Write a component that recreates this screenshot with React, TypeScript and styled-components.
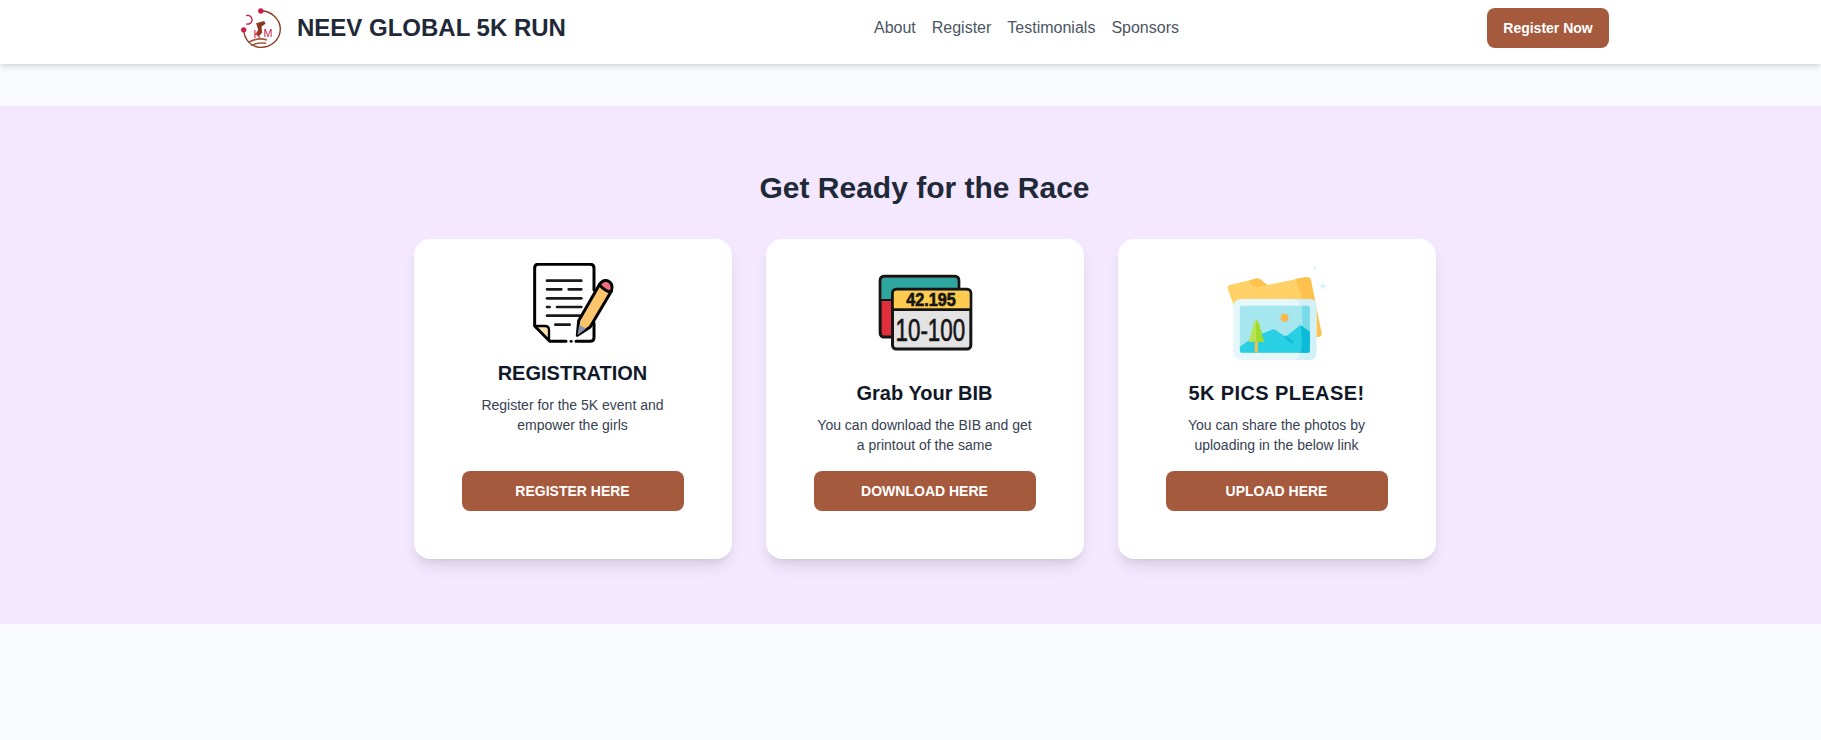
import React from "react";
import styled, { createGlobalStyle } from "styled-components";

const GlobalStyle = createGlobalStyle`
  html, body {
    margin: 0;
    padding: 0;
    background: #f9fafb;
    font-family: "Liberation Sans", Arial, sans-serif;
    overflow: hidden;
  }
  * { box-sizing: border-box; }
`;

const Page = styled.div`
  min-height: 740px;
  background: #f9fafb;
`;

const Header = styled.header`
  height: 64px;
  background: #fff;
  box-shadow: 0 4px 6px -1px rgba(0, 0, 0, 0.1), 0 2px 4px -2px rgba(0, 0, 0, 0.1);
  padding: 0 212px 8px 240px;
  display: flex;
  justify-content: space-between;
  align-items: center;
`;

const Brand = styled.div`
  display: flex;
  align-items: center;
  gap: 15px;
`;

const BrandName = styled.span`
  font-size: 24px;
  font-weight: 700;
  color: #1f2937;
`;

const Nav = styled.nav`
  display: flex;
  gap: 16px;
`;

const NavLink = styled.a`
  font-size: 16px;
  color: #4b5563;
`;

const Button = styled.button<{ $wide?: boolean }>`
  border: 0;
  background: #a65a3d;
  color: #fff;
  font-family: inherit;
  font-weight: 700;
  font-size: 14px;
  border-radius: 8px;
  height: 40px;
  width: ${(p) => (p.$wide ? "222px" : "122px")};
`;

const Section = styled.section`
  margin-top: 42px;
  height: 518px;
  background: #f3e8ff;
  padding: 64px 0 0 28px;
  display: flex;
  flex-direction: column;
  align-items: center;
`;

const Title = styled.h2`
  margin: 0 0 33px;
  font-size: 30px;
  line-height: 36px;
  font-weight: 700;
  color: #1f2937;
`;

const Cards = styled.div`
  display: grid;
  grid-template-columns: repeat(3, 318px);
  gap: 34px;
`;

const Card = styled.article`
  height: 320px;
  background: #fff;
  border-radius: 16px;
  box-shadow: 0 10px 15px -3px rgba(0, 0, 0, 0.1), 0 4px 6px -4px rgba(0, 0, 0, 0.1);
  display: flex;
  flex-direction: column;
  align-items: center;
  padding: 24px 0 48px;
`;

const IconSlot = styled.div<{ $height: number }>`
  height: ${(p) => p.$height}px;
  display: flex;
  align-items: flex-start;
  justify-content: center;
`;

const CardTitle = styled.h3<{ $tracking?: number }>`
  margin: 0 0 8px;
  font-size: 20px;
  line-height: 28px;
  font-weight: 700;
  color: #111827;
  letter-spacing: ${(p) => p.$tracking ?? 0}px;
`;

const CardText = styled.p`
  margin: 0;
  width: 222px;
  font-size: 14px;
  line-height: 20px;
  text-align: center;
  color: #374151;
`;

const CardButton = styled(Button)`
  margin-top: auto;
`;

const LogoMark = () => (
  <svg width="42" height="42" viewBox="60 20 125 125">
    <path d="M122 32 C150 30 180 55 180 85 C180 118 152 140 122 140 C95 140 72 118 71 88" fill="none" stroke="#8a3a22" strokeWidth="4" />
    <circle cx="122" cy="32" r="8" fill="#c9204a" />
    <circle cx="71" cy="88" r="8" fill="#c9204a" />
    <path d="M78 46 A13 13 0 1 1 78 70" fill="none" stroke="#c9204a" strokeWidth="4" />
    <path d="M108 68 L132 62 L136 70 L124 78 L126 96 L116 108 L108 100 L114 88 Z" fill="#8a3a22" />
    <path d="M84 126 C100 116 120 112 140 118 M92 134 C108 128 124 126 138 128" fill="none" stroke="#a65a3d" strokeWidth="5" />
    <text x="100" y="112" fontSize="32" fill="#c9204a" fontFamily="Liberation Sans">K</text>
    <text x="130" y="110" fontSize="32" fill="#c9204a" fontFamily="Liberation Sans">M</text>
  </svg>
);

const FormIcon = () => (
  <svg width="140" height="82" viewBox="9 39 420 246">
    <path
      d="M282 120 V54 Q282 43 270 43 H115 Q104 43 104 54 V228 L150 274 H198 M228 274 H270 Q282 274 282 262 V220"
      fill="#fff"
      stroke="#000"
      strokeWidth="9"
      strokeLinecap="round"
      strokeLinejoin="round"
    />
    <path d="M213 274 H214" stroke="#000" strokeWidth="8" strokeLinecap="round" />
    <path d="M105 228 H135 Q147 228 147 240 V270 Z" fill="#fde3b0" stroke="#000" strokeWidth="7" strokeLinejoin="round" />
    <g stroke="#1a1a1a" strokeWidth="8" strokeLinecap="round">
      <path d="M141 92 H244" />
      <path d="M141 118 H184 M206 118 H244" />
      <path d="M141 145 H244" />
      <path d="M141 171 H149 M171 171 H244" />
      <path d="M141 197 H244" />
      <path d="M166 224 H209" />
    </g>
    <path d="M232 256 L236 212 L298 104 L334 124 L270 232 Z" fill="#fbc56d" stroke="#000" strokeWidth="9" strokeLinejoin="round" />
    <path d="M232 256 L238 224 L258 236 Z" fill="#8a94a6" />
    <path d="M298 104 Q308 88 322 92 Q342 100 334 124 Q320 128 298 104 Z" fill="#f0717c" stroke="#000" strokeWidth="9" strokeLinejoin="round" />
  </svg>
);

const BibIcon = () => (
  <svg width="120" height="97" viewBox="13.5 9 360 291">
    <rect x="59" y="49" width="236" height="182" rx="11" fill="#e02f3d" stroke="#151515" strokeWidth="9" />
    <path d="M63 118 V62 Q63 53 72 53 H282 Q291 53 291 62 V118 Z" fill="#2ea6a0" />
    <path d="M60 120 H100" stroke="#151515" strokeWidth="6" />
    <rect x="96" y="88" width="235" height="179" rx="11" fill="#e4e3e4" stroke="#151515" strokeWidth="9" />
    <path d="M100 148 V101 Q100 92 109 92 H318 Q327 92 327 101 V148 Z" fill="#fdcb50" />
    <path d="M97 149 H330" stroke="#151515" strokeWidth="8" />
    <text transform="translate(137 139) scale(0.9 1)" fontSize="54" fontWeight="700" fill="#151515" stroke="#151515" strokeWidth="2" fontFamily="Liberation Sans">42.195</text>
    <text transform="translate(105 244) scale(0.7 1)" fontSize="96" fill="#151515" stroke="#151515" strokeWidth="2" fontFamily="Liberation Sans">10-100</text>
  </svg>
);

const PhotoIcon = () => (
  <svg width="130" height="102" viewBox="4.5 24 390 306">
    <path d="M51 100 Q50 92 58 90 L135 71 Q146 69 155 77 L170 90 L287 66 Q298 64 301 74 L333 235 Q334 243 326 245 L120 290 Z" fill="#ffd166" />
    <path d="M255 72 L287 66 Q298 64 301 74 L333 235 Q334 243 326 245 L316 247 Z" fill="#ffc14d" />
    <path d="M115 78 L135 71 Q146 69 155 77 L170 90 L140 96 Q128 96 115 78 Z" fill="#ffc14d" />
    <rect x="68" y="132" width="250" height="183" rx="22" fill="#e6f7fa" />
    <path d="M245 132 H296 Q318 132 318 154 V293 Q318 315 296 315 H245 Q268 315 268 293 V154 Q268 132 245 132 Z" fill="#d2f1f6" />
    <rect x="88" y="152" width="210" height="141" rx="6" fill="#a6e6ef" />
    <path d="M275 152 H292 Q298 152 298 158 V287 Q298 293 292 293 H275 Z" fill="#7adbe8" />
    <path d="M88 275 L130 245 L190 222 L225 245 L270 210 L298 230 V287 Q298 293 292 293 H94 Q88 293 88 287 Z" fill="#29cfe2" />
    <path d="M272 212 L298 230 V287 Q298 293 292 293 H262 Q274 293 274 275 Z" fill="#0dbbd9" />
    <path d="M225 245 L245 262" stroke="#0dbbd9" strokeWidth="7" strokeLinecap="round" />
    <circle cx="222" cy="188" r="12" fill="#fbb84a" />
    <rect x="133" y="250" width="9" height="43" fill="#f5c04e" />
    <path d="M137 192 L150 215 H146 L156 235 H151 L162 260 H113 L124 235 H119 L129 215 H125 Z" fill="#b8e356" />
    <path d="M137 192 L150 215 H146 L156 235 H151 L162 260 H137 Z" fill="#9fdc2e" />
    <path d="M338 80 L342 89 L351 93 L342 97 L338 106 L334 97 L325 93 L334 89 Z" fill="#d7f5f8" />
    <circle cx="312" cy="38" r="4" fill="#d7f5f8" />
  </svg>
);

const cards = [
  { key: "reg", title: "REGISTRATION", text: "Register for the 5K event and empower the girls", action: "REGISTER HERE", slot: 96, tracking: 0, icon: <FormIcon /> },
  { key: "bib", title: "Grab Your BIB", text: "You can download the BIB and get a printout of the same", action: "DOWNLOAD HERE", slot: 116, tracking: 0, icon: <BibIcon /> },
  { key: "pics", title: "5K PICS PLEASE!", text: "You can share the photos by uploading in the below link", action: "UPLOAD HERE", slot: 116, tracking: 0.4, icon: <PhotoIcon /> },
];

export default function App() {
  return (
    <Page>
      <GlobalStyle />
      <Header>
        <Brand>
          <LogoMark />
          <BrandName>NEEV GLOBAL 5K RUN</BrandName>
        </Brand>
        <Nav>
          {["About", "Register", "Testimonials", "Sponsors"].map((l) => (
            <NavLink key={l}>{l}</NavLink>
          ))}
        </Nav>
        <Button>Register Now</Button>
      </Header>
      <Section>
        <Title>Get Ready for the Race</Title>
        <Cards>
          {cards.map((c) => (
            <Card key={c.key}>
              <IconSlot $height={c.slot}>{c.icon}</IconSlot>
              <CardTitle $tracking={c.tracking}>{c.title}</CardTitle>
              <CardText>{c.text}</CardText>
              <CardButton $wide>{c.action}</CardButton>
            </Card>
          ))}
        </Cards>
      </Section>
    </Page>
  );
}
